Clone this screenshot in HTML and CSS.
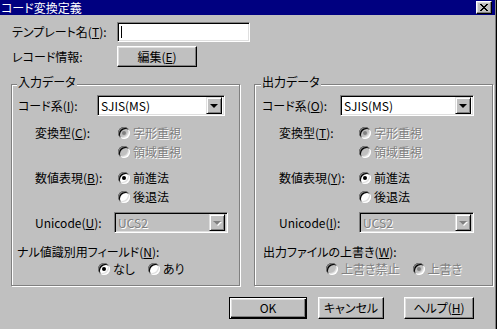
FILE: index.html
```html
<!DOCTYPE html>
<html lang="ja">

<head>
    <meta charset="UTF-8">
    <title>コード変換定義</title>
    <link rel="stylesheet" href="styles.css">
</head>

<body>
    <div class="window">
        <!-- タイトルバー -->
        <div class="titlebar">
            <span class="title-text">コード変換定義</span>
            <span class="close-btn">
                <svg width="8" height="7" viewBox="0 0 8 7" shape-rendering="crispEdges">
                    <path d="M0 0h2v1H0zM6 0h2v1H6zM1 1h2v1H1zM5 1h2v1H5zM2 2h4v1H2zM3 3h2v1H3zM2 4h4v1H2zM1 5h2v1H1zM5 5h2v1H5zM0 6h2v1H0zM6 6h2v1H6z" fill="#000" />
                </svg>
            </span>
        </div>

        <div class="dialog-body">
            <!-- テンプレート名 -->
            <div class="top-row">
                <span class="top-label">テンプレート名(<u>T</u>):</span>
                <div class="textbox"><span class="caret"></span></div>
            </div>

            <!-- レコード情報 -->
            <div class="top-row row-record">
                <span class="top-label">レコード情報:</span>
                <button class="btn btn-edit">編集(<u>E</u>)</button>
            </div>

            <div class="groups">
                <!-- 入力データ -->
                <div class="group group-in">
                    <div class="legend">入力データ</div>

                    <div class="field f-code">
                        <span class="lbl lbl-code">コード系(<u>I</u>):</span>
                        <div class="combo combo-code">
                            <span class="combo-text">SJIS(MS)</span>
                            <span class="combo-drop"><span class="arrow"></span></span>
                        </div>
                    </div>

                    <div class="field f-radio f-convert">
                        <span class="lbl lbl-indent">変換型(<u>C</u>):</span>
                        <span class="radio dis"><span class="rb gray on"></span>字形重視</span>
                    </div>
                    <div class="field f-radio">
                        <span class="lbl lbl-indent"></span>
                        <span class="radio dis"><span class="rb gray"></span>領域重視</span>
                    </div>

                    <div class="field f-radio f-number">
                        <span class="lbl lbl-indent">数値表現(<u>B</u>):</span>
                        <span class="radio"><span class="rb on"></span>前進法</span>
                    </div>
                    <div class="field f-radio">
                        <span class="lbl lbl-indent"></span>
                        <span class="radio"><span class="rb"></span>後退法</span>
                    </div>

                    <div class="field f-unicode">
                        <span class="lbl lbl-uni">Unicode(<u>U</u>):</span>
                        <div class="combo combo-uni disabled">
                            <span class="combo-text dis">UCS2</span>
                            <span class="combo-drop"><span class="arrow"></span></span>
                        </div>
                    </div>

                    <div class="field f-opt-label">
                        <span class="opt-label">ナル値識別用フィールド(<u>N</u>):</span>
                    </div>
                    <div class="field f-opt">
                        <span class="radio"><span class="rb on"></span>なし</span>
                        <span class="radio"><span class="rb"></span>あり</span>
                    </div>
                </div>

                <!-- 出力データ -->
                <div class="group group-out">
                    <div class="legend">出力データ</div>

                    <div class="field f-code">
                        <span class="lbl lbl-code">コード系(<u>O</u>):</span>
                        <div class="combo combo-code">
                            <span class="combo-text">SJIS(MS)</span>
                            <span class="combo-drop"><span class="arrow"></span></span>
                        </div>
                    </div>

                    <div class="field f-radio f-convert">
                        <span class="lbl lbl-indent">変換型(<u>T</u>):</span>
                        <span class="radio dis"><span class="rb gray on"></span>字形重視</span>
                    </div>
                    <div class="field f-radio">
                        <span class="lbl lbl-indent"></span>
                        <span class="radio dis"><span class="rb gray"></span>領域重視</span>
                    </div>

                    <div class="field f-radio f-number">
                        <span class="lbl lbl-indent">数値表現(<u>Y</u>):</span>
                        <span class="radio"><span class="rb on"></span>前進法</span>
                    </div>
                    <div class="field f-radio">
                        <span class="lbl lbl-indent"></span>
                        <span class="radio"><span class="rb"></span>後退法</span>
                    </div>

                    <div class="field f-unicode">
                        <span class="lbl lbl-uni">Unicode(<u>I</u>):</span>
                        <div class="combo combo-uni disabled">
                            <span class="combo-text dis">UCS2</span>
                            <span class="combo-drop"><span class="arrow"></span></span>
                        </div>
                    </div>

                    <div class="field f-opt-label">
                        <span class="opt-label">出力ファイルの上書き(<u>W</u>):</span>
                    </div>
                    <div class="field f-opt">
                        <span class="radio dis"><span class="rb gray"></span>上書き禁止</span>
                        <span class="radio dis"><span class="rb gray on"></span>上書き</span>
                    </div>
                </div>
            </div>

            <!-- ボタン -->
            <div class="buttons">
                <button class="btn btn-ok">OK</button>
                <button class="btn btn-cancel">キャンセル</button>
                <button class="btn btn-help">ヘルプ(<u>H</u>)</button>
            </div>
        </div>
    </div>
</body>

</html>
```

FILE: styles.css
```css
/* 全体 */
body {
    margin: 0;
    background: #c0c0c0;
    font-family: "Noto Sans CJK JP", sans-serif;
    font-size: 12px;
    line-height: 14px;
    font-feature-settings: "palt";
    color: #000;
}

u {
    text-underline-offset: 1px;
}

.window {
    width: 497px;
    height: 329px;
    box-sizing: border-box;
    border-right: 1px solid #000;
    box-shadow: inset -1px 0 0 #808080;
    overflow: hidden;
}

/* タイトルバー */
.titlebar {
    height: 15px;
    margin-right: 1px;
    padding: 0 3px 0 1px;
    background: #000080;
    color: #fff;
    display: flex;
    justify-content: space-between;
    align-items: center;
}

.title-text {
    line-height: 15px;
}

.close-btn {
    width: 16px;
    height: 13px;
    box-sizing: border-box;
    background: #c0c0c0;
    border: 1px solid;
    border-color: #fff #000 #000 #fff;
    box-shadow: inset -1px -1px 0 #808080, inset 1px 1px 0 #dfdfdf;
    display: flex;
    align-items: center;
    justify-content: center;
}

/* 本体 */
.dialog-body {
    padding: 7px 0 0 11px;
}

.top-row {
    display: flex;
    align-items: center;
    height: 20px;
    padding-left: 1px;
}

.top-label {
    width: 105px;
}

.textbox {
    width: 133px;
    height: 20px;
    box-sizing: border-box;
    padding: 3px 0 0 3px;
    background: #fff;
    border: 1px solid;
    border-color: #808080 #fff #fff #808080;
    box-shadow: inset 1px 1px 0 #000, inset -1px -1px 0 #dfdfdf;
}

.caret {
    display: block;
    width: 1px;
    height: 12px;
    background: #000;
}

.row-record {
    margin-top: 4px;
    height: 21px;
}

/* ボタン */
.btn {
    font: inherit;
    font-feature-settings: "palt";
    color: #000;
    height: 21px;
    padding: 0;
    background: #c0c0c0;
    border: 1px solid;
    border-color: #fff #000 #000 #fff;
    box-shadow: inset -1px -1px 0 #808080, inset 1px 1px 0 #dfdfdf;
}

.btn-edit {
    width: 80px;
}

/* グループ */
.groups {
    display: flex;
    gap: 14px;
    margin-top: 17px;
}

.group {
    box-sizing: border-box;
    height: 202px;
    border: 1px solid #808080;
    box-shadow: inset 1px 1px 0 #fff, 1px 1px 0 #fff;
}

.group-in {
    width: 229px;
    padding-left: 6px;
}

.group-out {
    width: 239px;
    padding-left: 7px;
}

.legend {
    width: fit-content;
    margin: -10px 0 0 -1px;
    padding: 0 1px;
    line-height: 14px;
    background: #c0c0c0;
}

.field {
    display: flex;
    align-items: center;
}

.f-code {
    height: 21px;
    margin-top: 6px;
}

.group-in .lbl-code {
    width: 79px;
}

.group-out .lbl-code {
    width: 78px;
}

.f-radio {
    height: 19px;
}

.f-convert,
.f-number {
    margin-top: 7px;
}

.lbl-indent {
    margin-left: 17px;
}

.group-in .lbl-indent {
    width: 83px;
}

.group-out .lbl-indent {
    width: 80px;
}

.f-unicode {
    height: 21px;
    margin-top: 6px;
}

.lbl-uni {
    margin-left: 17px;
}

.group-in .lbl-uni {
    width: 79px;
}

.group-out .lbl-uni {
    width: 80px;
}

.f-opt-label {
    height: 16px;
    margin-top: 11px;
}

.group-in .opt-label {
    margin-left: -1px;
}

.group-out .opt-label {
    margin-left: 1px;
}

.f-opt {
    height: 16px;
    margin-top: 1px;
    gap: 13px;
}

.group-in .f-opt {
    padding-left: 80px;
}

.group-out .f-opt {
    padding-left: 64px;
}

/* コンボボックス */
.combo {
    box-sizing: border-box;
    height: 21px;
    padding: 2px;
    background: #fff;
    border: 1px solid;
    border-color: #808080 #fff #fff #808080;
    box-shadow: inset 1px 1px 0 #000, inset -1px -1px 0 #dfdfdf;
    display: flex;
    align-items: center;
    justify-content: space-between;
}

.combo.disabled {
    background: #c0c0c0;
}

.group-in .combo-code {
    width: 128px;
}

.group-out .combo-code {
    width: 134px;
}

.group-in .combo-uni {
    width: 114px;
}

.group-out .combo-uni {
    width: 115px;
}

.combo-text {
    padding-left: 1px;
}

.combo-drop {
    width: 16px;
    height: 17px;
    box-sizing: border-box;
    background: #c0c0c0;
    border: 1px solid;
    border-color: #dfdfdf #000 #000 #dfdfdf;
    box-shadow: inset 1px 1px 0 #fff, inset -1px -1px 0 #808080;
    display: flex;
    align-items: center;
    justify-content: center;
}

.arrow {
    width: 0;
    height: 0;
    border-left: 4px solid transparent;
    border-right: 4px solid transparent;
    border-top: 4px solid #000;
}

.disabled .arrow {
    border-top-color: #808080;
    filter: drop-shadow(1px 1px 0 #fff);
}

/* ラジオボタン */
.radio {
    display: flex;
    align-items: center;
    white-space: nowrap;
}

.rb {
    position: relative;
    width: 12px;
    height: 12px;
    margin-right: 3px;
    border-radius: 50%;
    background: #fff;
    box-shadow: inset 1px 1px 0 #808080, inset -1px -1px 0 #fff,
        inset 2px 2px 0 #000, inset -2px -2px 0 #dfdfdf;
}

.rb.gray {
    background: #c0c0c0;
}

.rb.on::after {
    content: "";
    position: absolute;
    left: 4px;
    top: 4px;
    width: 4px;
    height: 4px;
    border-radius: 50%;
    background: #000;
}

.rb.gray.on::after {
    background: #808080;
}

/* 無効テキスト */
.dis {
    color: #808080;
    text-shadow: 1px 1px 0 #fff;
}

/* 下部ボタン */
.buttons {
    display: flex;
    margin: 11px 0 0 218px;
}

.buttons .btn {
    height: 22px;
}

.btn-ok {
    width: 78px;
    border-color: #000;
    box-shadow: inset 1px 1px 0 #fff, inset -1px -1px 0 #000,
        inset -2px -2px 0 #808080, inset 2px 2px 0 #dfdfdf;
}

.btn-cancel {
    width: 66px;
    margin-left: 11px;
}

.btn-help {
    width: 70px;
    margin-left: 20px;
}
```
